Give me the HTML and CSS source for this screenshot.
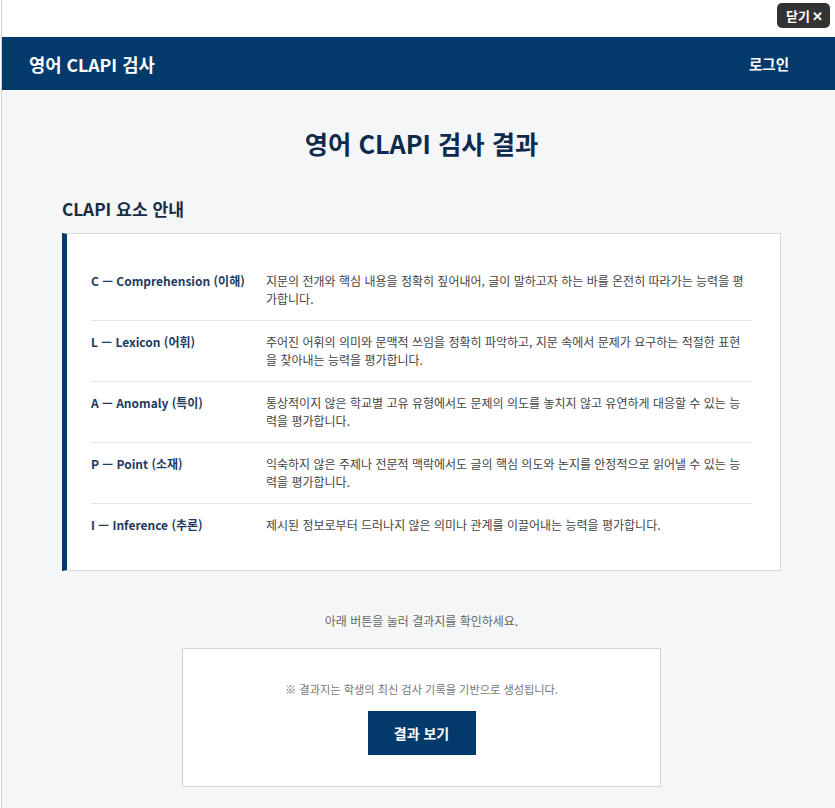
FILE: index.html
```html
<!DOCTYPE html>
<html lang="ko">
<head>
<meta charset="utf-8">
<title>영어 CLAPI 검사 결과</title>
<link rel="stylesheet" href="styles.css">
</head>
<body>
<div class="frame">
  <div class="topbar">
    <button class="close-btn" type="button">닫기 <span class="x">✕</span></button>
  </div>
  <header class="site-header">
    <div class="brand">영어 CLAPI 검사</div>
    <a class="login" href="#">로그인</a>
  </header>
  <main class="page">
    <div class="container">
      <h1 class="page-title">영어 CLAPI 검사 결과</h1>
      <h2 class="section-title">CLAPI 요소 안내</h2>
      <div class="card">
        <div class="row">
          <div class="label">C — Comprehension (이해)</div>
          <div class="desc">지문의 전개와 핵심 내용을 정확히 짚어내어, 글이 말하고자 하는 바를 온전히 따라가는 능력을 평가합니다.</div>
        </div>
        <div class="row">
          <div class="label">L — Lexicon (어휘)</div>
          <div class="desc">주어진 어휘의 의미와 문맥적 쓰임을 정확히 파악하고, 지문 속에서 문제가 요구하는 적절한 표현을 찾아내는 능력을 평가합니다.</div>
        </div>
        <div class="row">
          <div class="label">A — Anomaly (특이)</div>
          <div class="desc">통상적이지 않은 학교별 고유 유형에서도 문제의 의도를 놓치지 않고 유연하게 대응할 수 있는 능력을 평가합니다.</div>
        </div>
        <div class="row">
          <div class="label">P — Point (소재)</div>
          <div class="desc">익숙하지 않은 주제나 전문적 맥락에서도 글의 핵심 의도와 논지를 안정적으로 읽어낼 수 있는 능력을 평가합니다.</div>
        </div>
        <div class="row">
          <div class="label">I — Inference (추론)</div>
          <div class="desc">제시된 정보로부터 드러나지 않은 의미나 관계를 이끌어내는 능력을 평가합니다.</div>
        </div>
      </div>
      <p class="hint">아래 버튼을 눌러 결과지를 확인하세요.</p>
      <div class="result-box">
        <p class="note">※ 결과지는 학생의 최신 검사 기록을 기반으로 생성됩니다.</p>
        <button class="result-btn" type="button">결과 보기</button>
      </div>
    </div>
  </main>
</div>
</body>
</html>
```

FILE: styles.css
```css
* { box-sizing: border-box; }
html, body { margin: 0; padding: 0; }
body {
  background: #ffffff;
  font-family: "Noto Sans CJK KR", "Noto Sans", sans-serif;
  color: #333;
}
.frame {
  margin-left: 1px;
  border-left: 1px solid #d0d0d0;
  min-height: 808px;
  background: #f5f6f8;
}
.topbar {
  height: 37px;
  background: #ffffff;
  display: flex;
  justify-content: flex-end;
  align-items: flex-start;
  padding: 3px 5px 0 0;
}
.close-btn {
  height: 25px;
  padding: 0 7px 0 9px;
  border: 0;
  border-radius: 5px;
  background: #333333;
  color: #ffffff;
  font-family: inherit;
  font-size: 13px;
  font-weight: 700;
  display: flex;
  align-items: center;
  gap: 2px;
}
.close-btn .x { font-size: 13px; }
.site-header {
  height: 53px;
  background: #013a6b;
  display: flex;
  align-items: center;
  justify-content: space-between;
  padding: 0 46px 0 27px;
}
.brand {
  color: #fff;
  font-size: 17.7px;
  font-weight: 700;
}
.login {
  color: #fff;
  font-size: 14.5px;
  font-weight: 700;
  text-decoration: none;
}
.page {
  padding: 37px 0 40px;
}
.container {
  width: 719px;
  margin-left: 60px;
}
.page-title {
  margin: 0;
  text-align: center;
  font-size: 25.3px;
  line-height: 33px;
  font-weight: 700;
  color: #0e2a4c;
}
.section-title {
  margin: 36px 0 12px;
  font-size: 17.2px;
  line-height: 25px;
  font-weight: 700;
  color: #1a2b44;
}
.card {
  background: #fff;
  border: 1px solid #d5d9e0;
  border-left: 5px solid #013a6b;
  padding: 26px 28px 24px 24px;
}
.row {
  display: grid;
  grid-template-columns: 175px 1fr;
  padding: 12px 0;
  border-top: 1px solid #e3e5e9;
  font-size: 12px;
  line-height: 18px;
}
.row:first-child { border-top: 0; }
.label {
  font-weight: 700;
  color: #1d3a5f;
}
.desc {
  color: #444;
  padding-right: 5px;
}
.hint {
  margin: 41px 0 19px;
  text-align: center;
  font-size: 12px;
  line-height: 17px;
  color: #666;
}
.result-box {
  width: 479px;
  margin: 0 auto;
  background: #fff;
  border: 1px solid #d0d4db;
  padding: 32px 0 31px;
  display: flex;
  flex-direction: column;
  align-items: center;
}
.note {
  margin: 0 0 13px;
  font-size: 11.2px;
  line-height: 17px;
  color: #777;
}
.result-btn {
  width: 108px;
  height: 44px;
  border: 0;
  background: #013a6b;
  color: #fff;
  font-family: inherit;
  font-size: 14px;
  font-weight: 700;
}
```
